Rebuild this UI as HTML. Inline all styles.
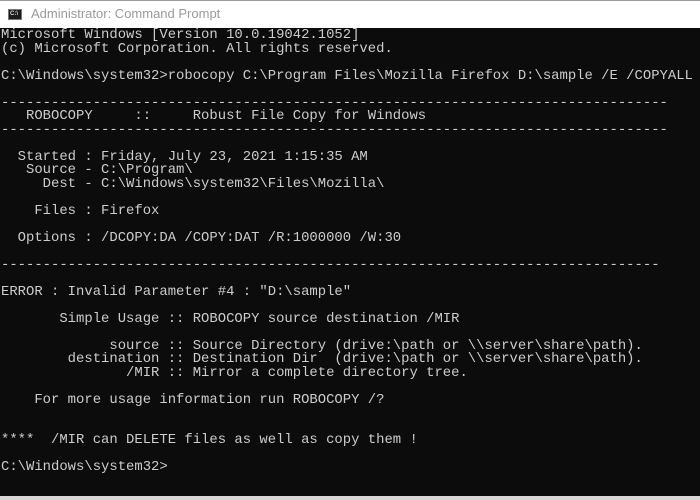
<!DOCTYPE html>
<html><head><style>
html,body{margin:0;padding:0;width:700px;height:500px;overflow:hidden;background:#0c0c0c}
.title{position:absolute;left:0;top:0;width:700px;height:28px;background:#fff;border-top:1px solid #9a9a9a;box-sizing:border-box}
.title .ic{position:absolute;left:8px;top:8px;width:14px;height:11px;background:#1a1a1a;border:1px solid #777;box-sizing:border-box}
.title .ic:after{content:"C:\\";position:absolute;left:1px;top:1px;font:bold 6px "Liberation Sans",sans-serif;color:#ddd}
.title span{position:absolute;left:31px;top:5px;font:13px "Liberation Sans",sans-serif;color:#9a9a9a}
pre{position:absolute;left:1px;top:29px;margin:0;font-family:"Liberation Mono",monospace;font-size:13.9px;line-height:13.5px;color:#cccccc}
.bot{position:absolute;left:0;top:496px;width:700px;height:4px;background:#d8d8d8}
</style></head><body>
<div class="title"><div class="ic"></div><span>Administrator: Command Prompt</span></div>
<pre>Microsoft Windows [Version 10.0.19042.1052]
(c) Microsoft Corporation. All rights reserved.

C:\Windows\system32&gt;robocopy C:\Program Files\Mozilla Firefox D:\sample /E /COPYALL

--------------------------------------------------------------------------------
   ROBOCOPY     ::     Robust File Copy for Windows
--------------------------------------------------------------------------------

  Started : Friday, July 23, 2021 1:15:35 AM
   Source - C:\Program\
     Dest - C:\Windows\system32\Files\Mozilla\

    Files : Firefox

  Options : /DCOPY:DA /COPY:DAT /R:1000000 /W:30

-------------------------------------------------------------------------------

ERROR : Invalid Parameter #4 : "D:\sample"

       Simple Usage :: ROBOCOPY source destination /MIR

             source :: Source Directory (drive:\path or \\server\share\path).
        destination :: Destination Dir  (drive:\path or \\server\share\path).
               /MIR :: Mirror a complete directory tree.

    For more usage information run ROBOCOPY /?


****  /MIR can DELETE files as well as copy them !

C:\Windows\system32&gt;</pre>
<div class="bot"></div>
</body></html>
